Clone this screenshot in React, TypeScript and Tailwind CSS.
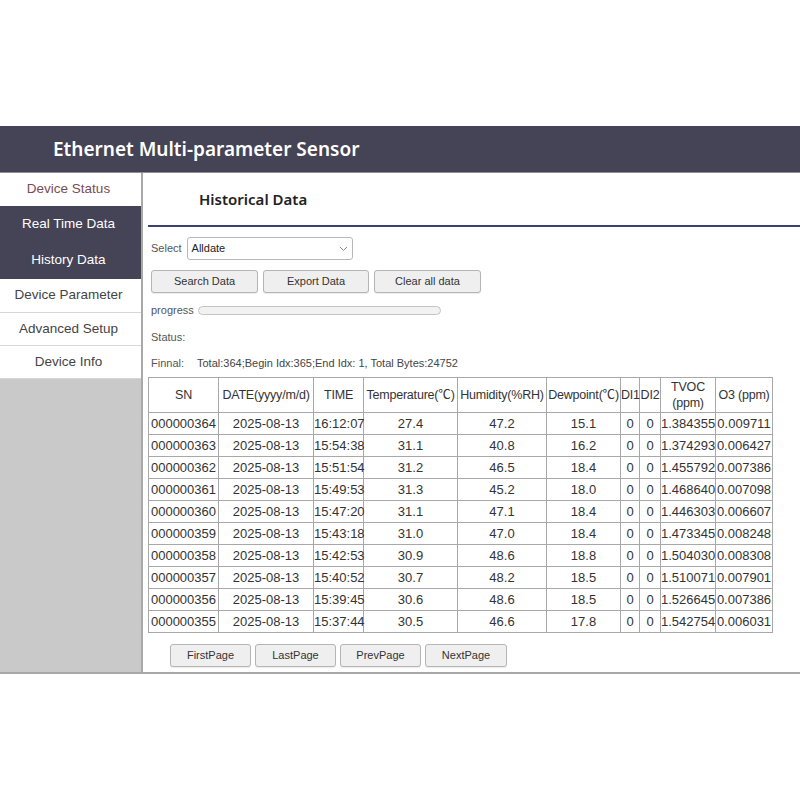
import React from "react";

const rows = [
  ["000000364", "2025-08-13", "16:12:07", "27.4", "47.2", "15.1", "0", "0", "1.384355", "0.009711"],
  ["000000363", "2025-08-13", "15:54:38", "31.1", "40.8", "16.2", "0", "0", "1.374293", "0.006427"],
  ["000000362", "2025-08-13", "15:51:54", "31.2", "46.5", "18.4", "0", "0", "1.455792", "0.007386"],
  ["000000361", "2025-08-13", "15:49:53", "31.3", "45.2", "18.0", "0", "0", "1.468640", "0.007098"],
  ["000000360", "2025-08-13", "15:47:20", "31.1", "47.1", "18.4", "0", "0", "1.446303", "0.006607"],
  ["000000359", "2025-08-13", "15:43:18", "31.0", "47.0", "18.4", "0", "0", "1.473345", "0.008248"],
  ["000000358", "2025-08-13", "15:42:53", "30.9", "48.6", "18.8", "0", "0", "1.504030", "0.008308"],
  ["000000357", "2025-08-13", "15:40:52", "30.7", "48.2", "18.5", "0", "0", "1.510071", "0.007901"],
  ["000000356", "2025-08-13", "15:39:45", "30.6", "48.6", "18.5", "0", "0", "1.526645", "0.007386"],
  ["000000355", "2025-08-13", "15:37:44", "30.5", "46.6", "17.8", "0", "0", "1.542754", "0.006031"],
];

const colWidths = [70, 95, 50, 94, 89, 74, 19, 21, 55, 57];

function Btn({ children, w }: { children: React.ReactNode; w: string }) {
  return (
    <button
      className={`${w} h-[23px] border border-[#b5b5b5] rounded-[3px] bg-[#efefef] text-[11px] text-[#333] shadow-[0_1px_1px_rgba(0,0,0,0.08)] flex items-center justify-center`}
    >
      {children}
    </button>
  );
}

export default function App() {
  const font = { fontFamily: '"Liberation Sans", "Noto Sans CJK SC", sans-serif' };
  return (
    <div className="w-[800px] h-[800px] bg-white text-[#333] overflow-hidden" style={font}>
      <div className="h-[126px]" />
      <div
        className="h-[46px] bg-[#454356] flex items-center pl-[53px] text-white text-[19px] font-semibold"
        style={{ fontFamily: '"Noto Sans", sans-serif' }}
      >
        Ethernet Multi-parameter Sensor
      </div>
      <div className="h-[502px] flex border-t border-[#8e8d96] border-b-2 border-b-[#a8a8a8]">
        <div className="w-[141px] bg-[#c9c9c9] flex flex-col text-[13.5px]">
          <div className="h-[33px] bg-white flex items-center justify-center pr-[4px] text-[#7b4b55]">Device Status</div>
          <div className="h-[36px] bg-[#454356] flex items-center justify-center pr-[4px] text-white">Real Time Data</div>
          <div className="h-[37px] bg-[#454356] flex items-center justify-center pr-[4px] text-white">History Data</div>
          <div className="h-[34px] bg-white flex items-center justify-center pr-[4px] text-[#444] border-b border-[#d6d6d6]">Device Parameter</div>
          <div className="h-[33px] bg-white flex items-center justify-center pr-[4px] text-[#444] border-b border-[#d6d6d6]">Advanced Setup</div>
          <div className="h-[33px] bg-white flex items-center justify-center pr-[4px] text-[#444] border-b border-[#d6d6d6]">Device Info</div>
        </div>
        <div className="flex-1 border-l-2 border-[#a9a9a9] bg-white pl-[5px] flex flex-col">
          <div
            className="h-[52px] flex items-center pl-[51px] text-[15px] font-semibold text-[#222]"
            style={{ fontFamily: '"Noto Sans", sans-serif' }}
          >
            Historical Data
          </div>
          <div className="h-[2px] bg-[#3b4270]" />
          <div className="pl-[3px] mt-[10px] flex items-center gap-[5px] h-[23px]">
            <span className="text-[11px] text-[#555]">Select</span>
            <div className="w-[166px] h-[23px] border border-[#b8b8b8] rounded-[3px] flex items-center justify-between px-[4px] text-[11px] text-[#222]">
              <span>Alldate</span>
              <svg width="9" height="6" viewBox="0 0 9 6"><path d="M1 1l3.5 3.5L8 1" fill="none" stroke="#888" strokeWidth="1" /></svg>
            </div>
          </div>
          <div className="pl-[3px] mt-[10px] flex gap-[5px]">
            <Btn w="w-[107px]">Search Data</Btn>
            <Btn w="w-[106px]">Export Data</Btn>
            <Btn w="w-[107px]">Clear all data</Btn>
          </div>
          <div className="pl-[3px] mt-[11px] flex items-center gap-[4px] h-[12px]">
            <span className="text-[11px] text-[#555]">progress</span>
            <div className="w-[243px] h-[9px] rounded-full border border-[#c4c4c4] bg-[#f2f2f2]" />
          </div>
          <div className="pl-[3px] mt-[14px] h-[14px] flex items-center text-[11px] text-[#555]">Status:</div>
          <div className="pl-[3px] mt-[12px] h-[14px] flex items-center text-[11px] text-[#555]">
            <span className="w-[46px]">Finnal:</span>
            <span className="text-[11px] text-[#444]">Total:364;Begin Idx:365;End Idx: 1, Total Bytes:24752</span>
          </div>
          <table className="mt-[7px] border-collapse table-fixed text-[13px] text-[#333]" style={{ width: 624 }}>
            <colgroup>
              {colWidths.map((w, i) => (
                <col key={i} style={{ width: w }} />
              ))}
            </colgroup>
            <thead>
              <tr className="h-[35px]">
                {["SN", "DATE(yyyy/m/d)", "TIME", "Temperature(℃)", "Humidity(%RH)", "Dewpoint(℃)", "DI1", "DI2", "TVOC (ppm)", "O3 (ppm)"].map((h, i) => (
                  <th
                    key={i}
                    className={`border border-[#a8a8a8] font-normal p-0 leading-[16px] text-[12.5px] tracking-[-0.2px] ${i === 8 ? "whitespace-normal px-[8px]" : "whitespace-nowrap"}`}
                  >
                    {h}
                  </th>
                ))}
              </tr>
            </thead>
            <tbody>
              {rows.map((r, ri) => (
                <tr key={ri} className="h-[22px]">
                  {r.map((c, ci) => (
                    <td key={ci} className="border border-[#a8a8a8] p-0 text-center whitespace-nowrap leading-[20px]">
                      {c}
                    </td>
                  ))}
                </tr>
              ))}
            </tbody>
          </table>
          <div className="mt-[11px] pl-[22px] flex gap-[4px]">
            <Btn w="w-[81px]">FirstPage</Btn>
            <Btn w="w-[81px]">LastPage</Btn>
            <Btn w="w-[81px]">PrevPage</Btn>
            <Btn w="w-[82px]">NextPage</Btn>
          </div>
        </div>
      </div>
    </div>
  );
}
